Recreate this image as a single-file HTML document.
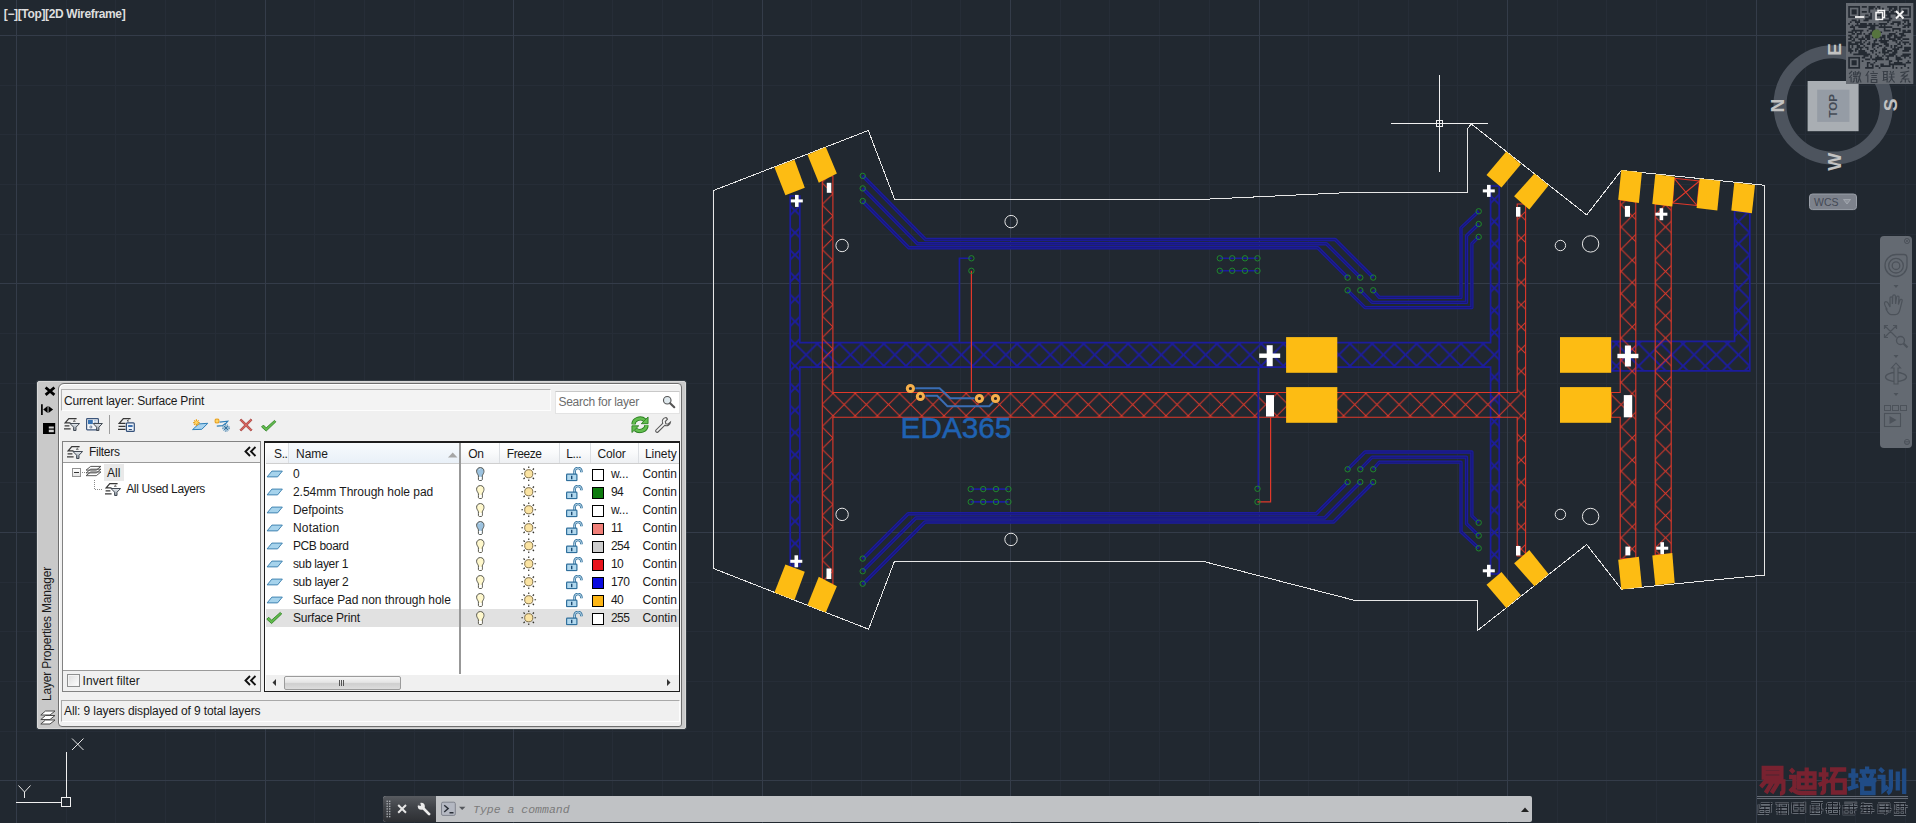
<!DOCTYPE html>
<html><head><meta charset="utf-8"><title>AutoCAD</title>
<style>
*{box-sizing:border-box;margin:0;padding:0}
html,body{width:1916px;height:823px;overflow:hidden;background:#212830}
body{position:relative;font-family:"Liberation Sans",sans-serif;font-size:12px;color:#1a1a1a}
.abs{position:absolute}
svg{position:absolute;left:0;top:0;overflow:visible}
.t{position:absolute;white-space:nowrap;line-height:14px;height:14px}
</style></head>
<body>

<svg width="0" height="0" style="position:absolute">
<defs>
<linearGradient id="gfun" x1="0" y1="0" x2="0" y2="1"><stop offset="0" stop-color="#e8ecf0"/><stop offset="1" stop-color="#8d97a3"/></linearGradient>
<symbol id="bulb" viewBox="0 0 9 15"><path d="M4.500 .6C2.200 .6 .6 2.300 .6 4.400c0 1.900 1.300 3 1.900 4.700v3.800c0 .6.600 1 1.200 1h1.600c.6 0 1.200-.4 1.200-1V9.100c.6-1.700 1.900-2.800 1.900-4.700C8.400 2.300 6.800 .6 4.500 .6z" fill="currentColor" stroke="#4e4e46" stroke-width="1"/><rect x="3.100" y="10" width="2.800" height="3.500" rx=".6" fill="#fff"/><path d="M3.200 3.200q.3-1.400 1.600-1.500" stroke="#fff" stroke-width=".8" fill="none" opacity=".7"/></symbol>
<symbol id="sun" viewBox="0 0 16 16"><circle cx="8" cy="8" r="4.200" fill="#fbe4a3" stroke="#7d6b44" stroke-width="1"/><path d="M8 .4v1.700M8 13.900v1.700M.4 8h1.700M13.900 8h1.700M2.600 2.600l1.300 1.300M12.100 12.100l1.300 1.300M13.400 2.600l-1.300 1.300M3.900 12.100l-1.300 1.300" stroke="#33322a" stroke-width="1.200"/></symbol>
<symbol id="lock" viewBox="0 0 17 14.500"><path d="M8.600 7.200V4.300a3.400 3.400 0 0 1 6.800 0V5.300" fill="none" stroke="#2f6f9c" stroke-width="2.600"/><path d="M8.600 7.200V4.300a3.400 3.400 0 0 1 6.800 0V5" fill="none" stroke="#d4ebf7" stroke-width=".9"/><rect x=".6" y="7.200" width="10.300" height="6.500" rx=".7" fill="#b1d8ee" stroke="#2f6f9c" stroke-width="1.200"/><path d="M5.700 8.700v3.500" stroke="#1c4a72" stroke-width="1.400"/></symbol>
<symbol id="lay" viewBox="0 0 18 10"><path d="M6 2.200H17L12 8.300H1z" fill="#a6d3ec" stroke="#3b7fae" stroke-width="1"/></symbol>
<symbol id="chk" viewBox="0 0 18 14"><path d="M1.500 8.500l2-2 3 3L15.500 1.500l1.500 1.500L6.500 13z" fill="#62bb4c" stroke="#2f8226" stroke-width=".9"/></symbol>
<symbol id="fil" viewBox="0 0 16 13"><path d="M12.600 .7H4.800L1.200 4.800H6.500M.6 7.800H5.400M0 10.800H6.600" fill="none" stroke="#383838" stroke-width="1.250"/><path d="M11.200 1.600L9.300 3.300h2.300" fill="none" stroke="#454545" stroke-width=".8"/><path d="M6 5.500h9.600l-3.600 3.700v3.300h-2.400V9.200z" fill="url(#gfun)" stroke="#424a54" stroke-width="1"/></symbol>
<symbol id="fil2" viewBox="0 0 17 13"><rect x=".6" y=".6" width="11.800" height="11.300" rx=".8" fill="#f2f5f9" stroke="#3c557a" stroke-width="1.200"/><rect x="2" y="1.900" width="4.800" height="4.200" fill="#3773b4"/><path d="M8 2.800h2.600M8 4.800h2.600" stroke="#9ab4d2" stroke-width="1"/><path d="M3.600 9l1.300-1.300L6.200 9 4.900 10.300z" stroke="#3c557a" stroke-width=".8" fill="none"/><path d="M7.200 5.500h9.200l-3.500 3.700v3.300h-2.300V9.200z" fill="url(#gfun)" stroke="#424a54" stroke-width="1"/></symbol>
<symbol id="sta" viewBox="0 0 17 14"><path d="M12.600 .6H5.400L1.200 5.400H7.500M.6 8.400H7.500M0 11.400H7.500" fill="none" stroke="#383838" stroke-width="1.250"/><path d="M10.600 1.500L9 3h2" fill="none" stroke="#454545" stroke-width=".8"/><rect x="8.400" y="4.800" width="7.900" height="8.600" rx="1" fill="#edf3f9" stroke="#34507a" stroke-width="1.200"/><rect x="10.100" y="7" width="4.500" height="2" fill="#3d6fae"/><path d="M10.800 11.500h3.100" stroke="#34507a" stroke-width="1"/></symbol>
<symbol id="newl" viewBox="0 0 16.500 11.500"><path d="M6.800 4.900L15.800 4.300 9.800 10.300 .5 10.700z" fill="#a9d4f0" stroke="#2f7fb8" stroke-width="1"/><path d="M4.400 .3v6.600M1.100 3.600h6.600M2.100 1.300l4.600 4.600M6.700 1.300L2.100 5.900" stroke="#eba21c" stroke-width="1.200"/><circle cx="4.400" cy="3.600" r="1.500" fill="#ffd766"/></symbol>
<symbol id="newf" viewBox="0 0 16.500 14"><path d="M3 .2v5.600M.2 3h5.600M1 1l4 4M5 1L1 5" stroke="#eba21c" stroke-width="1.100"/><circle cx="3" cy="3" r="1.200" fill="#ffd766"/><path d="M5.500 4.200l8.200-1-2.200 2.600M2.800 8.200l6-.6 2.700-2" fill="none" stroke="#2f7fb8" stroke-width="1.200"/><circle cx="12" cy="10" r="3.300" fill="#eaf4fb" stroke="#2f6f9c" stroke-width="1" stroke-dasharray="1.300 1"/><path d="M12 7.200v5.600M9.200 10h5.600M10 8l4 4M14 8l-4 4" stroke="#2f6f9c" stroke-width=".9"/></symbol>
<symbol id="del" viewBox="0 0 14 14"><path d="M1 2.200L2.200 1 7 5.700 11.800 1 13 2.200 8.300 7 13 11.800 11.800 13 7 8.300 2.200 13 1 11.800 5.700 7z" fill="#d9645d" stroke="#a03a36" stroke-width=".8" stroke-linejoin="round"/></symbol>
<symbol id="ref" viewBox="0 0 20 18"><g id="refh"><path d="M3.300 8.600A6.800 6.200 0 0 1 14.800 4.300" fill="none" stroke="#2a7d20" stroke-width="4.400"/><path d="M3.300 8.600A6.800 6.200 0 0 1 14.800 4.300" fill="none" stroke="#62bd4e" stroke-width="2.600"/><path d="M11.300 7.900h7V1z" fill="#62bd4e" stroke="#2a7d20" stroke-width=".9" stroke-linejoin="round"/></g><use href="#refh" transform="rotate(180 10 9)"/></symbol>
<symbol id="wr" viewBox="0 0 18 18"><path d="M12 1.500a4 4 0 0 0-3.300 5.800L1.800 14.200a1.500 1.500 0 0 0 2 2l6.900-6.900A4 4 0 0 0 16.500 6l-2.500 2.200-2.200-.5-.5-2.200L13.500 3.200A4 4 0 0 0 12 1.500z" fill="#f4f4f4" stroke="#5a5a5a" stroke-width="1.100"/></symbol>
<symbol id="mag" viewBox="0 0 16 16"><circle cx="6" cy="6" r="4.300" fill="#dfe9ee" stroke="#555" stroke-width="1.300"/><path d="M9.300 9.300l4.700 4.700" stroke="#555" stroke-width="2.400" stroke-linecap="round"/></symbol>
<symbol id="stk2" viewBox="0 0 16 16"><path d="M5.500 1h9.500l-5 4H.8zM5.500 5.500h9.500l-5 4H.8zM5.500 10h9.500l-5 4H.8z" fill="#fff" stroke="#4a4a4a" stroke-width="1"/></symbol>
<symbol id="stk" viewBox="0 0 18 14"><path d="M6 1.500h11L12 5.500H1zM6 4.500h11L12 8.500H1zM6 7.500h11L12 11.500H1z" fill="#fff" stroke="#4a4a4a" stroke-width="1"/></symbol>
</defs></svg>

<svg width="1916" height="823" viewBox="0 0 1916 823">
<path d="M66.5 0V823M115.5 0V823M165.5 0V823M215.5 0V823M314.5 0V823M364.5 0V823M414.5 0V823M463.5 0V823M563.5 0V823M612.5 0V823M662.5 0V823M712.5 0V823M811.5 0V823M861.5 0V823M911.5 0V823M960.5 0V823M1060.5 0V823M1109.5 0V823M1159.5 0V823M1209.5 0V823M1308.5 0V823M1358.5 0V823M1408.5 0V823M1457.5 0V823M1557.5 0V823M1606.5 0V823M1656.5 0V823M1706.5 0V823M1805.5 0V823M1855.5 0V823M1905.5 0V823M0 85.5H1916M0 134.5H1916M0 184.5H1916M0 234.5H1916M0 333.5H1916M0 383.5H1916M0 432.5H1916M0 482.5H1916M0 582.5H1916M0 631.5H1916M0 681.5H1916M0 731.5H1916" stroke="#262d37" stroke-width="1" fill="none" shape-rendering="crispEdges"/>
<path d="M16.5 0V823M265.5 0V823M513.5 0V823M762.5 0V823M1010.5 0V823M1259.5 0V823M1507.5 0V823M1756.5 0V823M0 35.5H1916M0 283.5H1916M0 532.5H1916M0 780.5H1916" stroke="#343c49" stroke-width="1" fill="none" shape-rendering="crispEdges"/>
<defs>
<pattern id="hr" patternUnits="userSpaceOnUse" width="22.2" height="22.2" x="833" y="393.5">
<path d="M0 0L22.2 22.2M22.2 0L0 22.2" stroke="#e0382a" stroke-width="1" fill="none"/></pattern>
<pattern id="hb" patternUnits="userSpaceOnUse" width="22.2" height="22.2" x="795" y="343.7">
<path d="M0 0L22.2 22.2M22.2 0L0 22.2" stroke="#1c1c9e" stroke-width="1.8" fill="none"/></pattern>
</defs>
<polygon points="713.8,190.4 868.3,130.5 894.5,199.0 1210.5,199.0 1346.0,192.7 1467.8,192.7 1467.8,128.3 1471.4,124.0 1586.7,214.9 1621.3,170.4 1764.8,185.3 1764.8,575.0 1621.5,589.2 1586.7,544.6 1477.7,630.3 1477.7,600.7 1356.0,600.7 1201.7,561.0 894.6,561.0 868.6,629.2 713.8,568.6" fill="none" stroke="#e6e6e6" stroke-width="1" shape-rendering="crispEdges"/>
<polygon points="790.2,196.0 799.8,196.0 799.8,342.6 1490.6,342.6 1490.6,186.0 1499.2,186.0 1499.2,574.0 1490.6,574.0 1490.6,367.1 799.8,367.1 799.8,566.0 790.2,566.0" fill="url(#hb)" stroke="#1c1c9e" stroke-width="1.7"/>
<polygon points="1611.2,341.3 1734.6,341.3 1734.6,211.0 1749.8,213.0 1749.8,370.8 1611.2,370.8" fill="url(#hb)" stroke="#1c1c9e" stroke-width="1.7"/>
<polygon points="822.3,176.0 832.9,176.0 832.9,392.5 1517.2,392.5 1517.2,204.0 1525.6,204.0 1525.6,556.0 1517.2,556.0 1517.2,417.3 832.9,417.3 832.9,584.0 822.3,584.0" fill="url(#hr)" stroke="#e0382a" stroke-width="1.1"/>
<polygon points="1620.2,200.0 1635.8,202.0 1635.8,558.0 1620.2,559.0 1620.2,417.3 1611.2,417.3 1611.2,392.5 1620.2,392.5" fill="url(#hr)" stroke="#e0382a" stroke-width="1.1"/>
<polygon points="1655.2,204.0 1671.2,206.0 1671.2,554.0 1655.2,555.0" fill="url(#hr)" stroke="#e0382a" stroke-width="1.1"/>
<polygon points="1674.0,178.2 1699.5,181.0 1697.0,205.5 1672.5,203.0" fill="none" stroke="#e0382a" stroke-width="1.1"/>
<path d="M1674 178.2L1697 205.5M1699.5 181L1672.5 203" stroke="#e0382a" stroke-width="1.1" fill="none"/>
<polyline points="1373.2,290.3 1379.2,297.4 1461.0,297.4 1461.0,227.9 1478.7,211.3" fill="none" stroke="#1c1c9e" stroke-width="3.3" stroke-linejoin="round"/>
<polyline points="1373.2,290.3 1379.2,297.4 1461.0,297.4 1461.0,227.9 1478.7,211.3" fill="none" stroke="#181878" stroke-width="1.1" stroke-linejoin="round"/>
<polyline points="1373.2,469.3 1379.2,462.2 1461.0,462.2 1461.0,531.7 1478.7,548.3" fill="none" stroke="#1c1c9e" stroke-width="3.3" stroke-linejoin="round"/>
<polyline points="1373.2,469.3 1379.2,462.2 1461.0,462.2 1461.0,531.7 1478.7,548.3" fill="none" stroke="#181878" stroke-width="1.1" stroke-linejoin="round"/>
<polyline points="1360.3,290.3 1372.1,302.4 1466.5,302.4 1466.5,235.8 1478.7,224.0" fill="none" stroke="#1c1c9e" stroke-width="3.3" stroke-linejoin="round"/>
<polyline points="1360.3,290.3 1372.1,302.4 1466.5,302.4 1466.5,235.8 1478.7,224.0" fill="none" stroke="#181878" stroke-width="1.1" stroke-linejoin="round"/>
<polyline points="1360.3,469.3 1372.1,457.2 1466.5,457.2 1466.5,523.8 1478.7,535.6" fill="none" stroke="#1c1c9e" stroke-width="3.3" stroke-linejoin="round"/>
<polyline points="1360.3,469.3 1372.1,457.2 1466.5,457.2 1466.5,523.8 1478.7,535.6" fill="none" stroke="#181878" stroke-width="1.1" stroke-linejoin="round"/>
<polyline points="1347.6,290.3 1365.0,307.6 1471.9,307.6 1471.9,243.7 1478.7,236.9" fill="none" stroke="#1c1c9e" stroke-width="3.3" stroke-linejoin="round"/>
<polyline points="1347.6,290.3 1365.0,307.6 1471.9,307.6 1471.9,243.7 1478.7,236.9" fill="none" stroke="#181878" stroke-width="1.1" stroke-linejoin="round"/>
<polyline points="1347.6,469.3 1365.0,452.0 1471.9,452.0 1471.9,515.9 1478.7,522.7" fill="none" stroke="#1c1c9e" stroke-width="3.3" stroke-linejoin="round"/>
<polyline points="1347.6,469.3 1365.0,452.0 1471.9,452.0 1471.9,515.9 1478.7,522.7" fill="none" stroke="#181878" stroke-width="1.1" stroke-linejoin="round"/>
<polyline points="862.7,175.8 925.5,239.6 1335.2,239.6 1373.2,277.6" fill="none" stroke="#1c1c9e" stroke-width="3.5" stroke-linejoin="round"/>
<polyline points="862.7,175.8 925.5,239.6 1335.2,239.6 1373.2,277.6" fill="none" stroke="#181878" stroke-width="1.1" stroke-linejoin="round"/>
<polyline points="862.7,188.3 917.5,243.7 1326.4,243.7 1360.3,277.6" fill="none" stroke="#1c1c9e" stroke-width="3.5" stroke-linejoin="round"/>
<polyline points="862.7,188.3 917.5,243.7 1326.4,243.7 1360.3,277.6" fill="none" stroke="#181878" stroke-width="1.1" stroke-linejoin="round"/>
<polyline points="862.7,201.2 908.8,247.8 1317.8,247.8 1347.6,277.6" fill="none" stroke="#1c1c9e" stroke-width="3.5" stroke-linejoin="round"/>
<polyline points="862.7,201.2 908.8,247.8 1317.8,247.8 1347.6,277.6" fill="none" stroke="#181878" stroke-width="1.1" stroke-linejoin="round"/>
<polyline points="862.7,584.3 925.0,522.0 1333.5,522.0 1373.3,482.2" fill="none" stroke="#1c1c9e" stroke-width="3.5" stroke-linejoin="round"/>
<polyline points="862.7,584.3 925.0,522.0 1333.5,522.0 1373.3,482.2" fill="none" stroke="#181878" stroke-width="1.1" stroke-linejoin="round"/>
<polyline points="862.7,571.1 915.9,517.9 1324.6,517.9 1360.3,482.2" fill="none" stroke="#1c1c9e" stroke-width="3.5" stroke-linejoin="round"/>
<polyline points="862.7,571.1 915.9,517.9 1324.6,517.9 1360.3,482.2" fill="none" stroke="#181878" stroke-width="1.1" stroke-linejoin="round"/>
<polyline points="862.7,559.1 908.1,513.7 1316.2,513.7 1347.7,482.2" fill="none" stroke="#1c1c9e" stroke-width="3.5" stroke-linejoin="round"/>
<polyline points="862.7,559.1 908.1,513.7 1316.2,513.7 1347.7,482.2" fill="none" stroke="#181878" stroke-width="1.1" stroke-linejoin="round"/>
<polyline points="971.4,258.3 959.4,258.3 959.4,342.6" fill="none" stroke="#1c1c9e" stroke-width="1.6"/>
<polyline points="971.4,270.8 971.4,392.5" fill="none" stroke="#e0382a" stroke-width="1.2"/>
<polyline points="1258.3,367.1 1258.3,488.8" fill="none" stroke="#1c1c9e" stroke-width="1.6"/>
<polyline points="1270.6,417.3 1270.6,501.9 1257.5,501.9" fill="none" stroke="#e0382a" stroke-width="1.2"/>
<polyline points="1219.8,258.3 1257.5,258.3" fill="none" stroke="#1c1c9e" stroke-width="1.6"/>
<polyline points="1219.8,270.8 1257.5,270.8" fill="none" stroke="#1c1c9e" stroke-width="1.6"/>
<polyline points="970.7,489.1 1008.4,489.1" fill="none" stroke="#1c1c9e" stroke-width="1.6"/>
<polyline points="970.7,501.9 1008.4,501.9" fill="none" stroke="#1c1c9e" stroke-width="1.6"/>
<circle cx="862.7" cy="175.9" r="2.7" fill="none" stroke="#1e922c" stroke-width=".9"/>
<circle cx="862.7" cy="583.7" r="2.7" fill="none" stroke="#1e922c" stroke-width=".9"/>
<circle cx="862.7" cy="188.4" r="2.7" fill="none" stroke="#1e922c" stroke-width=".9"/>
<circle cx="862.7" cy="571.2" r="2.7" fill="none" stroke="#1e922c" stroke-width=".9"/>
<circle cx="862.7" cy="201.0" r="2.7" fill="none" stroke="#1e922c" stroke-width=".9"/>
<circle cx="862.7" cy="558.6" r="2.7" fill="none" stroke="#1e922c" stroke-width=".9"/>
<circle cx="1347.6" cy="277.6" r="2.7" fill="none" stroke="#1e922c" stroke-width=".9"/>
<circle cx="1347.6" cy="482.0" r="2.7" fill="none" stroke="#1e922c" stroke-width=".9"/>
<circle cx="1347.6" cy="290.3" r="2.7" fill="none" stroke="#1e922c" stroke-width=".9"/>
<circle cx="1347.6" cy="469.3" r="2.7" fill="none" stroke="#1e922c" stroke-width=".9"/>
<circle cx="1360.3" cy="277.6" r="2.7" fill="none" stroke="#1e922c" stroke-width=".9"/>
<circle cx="1360.3" cy="482.0" r="2.7" fill="none" stroke="#1e922c" stroke-width=".9"/>
<circle cx="1360.3" cy="290.3" r="2.7" fill="none" stroke="#1e922c" stroke-width=".9"/>
<circle cx="1360.3" cy="469.3" r="2.7" fill="none" stroke="#1e922c" stroke-width=".9"/>
<circle cx="1373.2" cy="277.6" r="2.7" fill="none" stroke="#1e922c" stroke-width=".9"/>
<circle cx="1373.2" cy="482.0" r="2.7" fill="none" stroke="#1e922c" stroke-width=".9"/>
<circle cx="1373.2" cy="290.3" r="2.7" fill="none" stroke="#1e922c" stroke-width=".9"/>
<circle cx="1373.2" cy="469.3" r="2.7" fill="none" stroke="#1e922c" stroke-width=".9"/>
<circle cx="1478.7" cy="211.3" r="2.7" fill="none" stroke="#1e922c" stroke-width=".9"/>
<circle cx="1478.7" cy="548.3" r="2.7" fill="none" stroke="#1e922c" stroke-width=".9"/>
<circle cx="1478.7" cy="224.0" r="2.7" fill="none" stroke="#1e922c" stroke-width=".9"/>
<circle cx="1478.7" cy="535.6" r="2.7" fill="none" stroke="#1e922c" stroke-width=".9"/>
<circle cx="1478.7" cy="236.9" r="2.7" fill="none" stroke="#1e922c" stroke-width=".9"/>
<circle cx="1478.7" cy="522.7" r="2.7" fill="none" stroke="#1e922c" stroke-width=".9"/>
<circle cx="1219.8" cy="258.3" r="2.7" fill="none" stroke="#1e922c" stroke-width=".9"/>
<circle cx="1219.8" cy="270.8" r="2.7" fill="none" stroke="#1e922c" stroke-width=".9"/>
<circle cx="1232.2" cy="258.3" r="2.7" fill="none" stroke="#1e922c" stroke-width=".9"/>
<circle cx="1232.2" cy="270.8" r="2.7" fill="none" stroke="#1e922c" stroke-width=".9"/>
<circle cx="1245.0" cy="258.3" r="2.7" fill="none" stroke="#1e922c" stroke-width=".9"/>
<circle cx="1245.0" cy="270.8" r="2.7" fill="none" stroke="#1e922c" stroke-width=".9"/>
<circle cx="1257.5" cy="258.3" r="2.7" fill="none" stroke="#1e922c" stroke-width=".9"/>
<circle cx="1257.5" cy="270.8" r="2.7" fill="none" stroke="#1e922c" stroke-width=".9"/>
<circle cx="970.7" cy="489.1" r="2.7" fill="none" stroke="#1e922c" stroke-width=".9"/>
<circle cx="970.7" cy="501.9" r="2.7" fill="none" stroke="#1e922c" stroke-width=".9"/>
<circle cx="983.2" cy="489.1" r="2.7" fill="none" stroke="#1e922c" stroke-width=".9"/>
<circle cx="983.2" cy="501.9" r="2.7" fill="none" stroke="#1e922c" stroke-width=".9"/>
<circle cx="996.0" cy="489.1" r="2.7" fill="none" stroke="#1e922c" stroke-width=".9"/>
<circle cx="996.0" cy="501.9" r="2.7" fill="none" stroke="#1e922c" stroke-width=".9"/>
<circle cx="1008.4" cy="489.1" r="2.7" fill="none" stroke="#1e922c" stroke-width=".9"/>
<circle cx="1008.4" cy="501.9" r="2.7" fill="none" stroke="#1e922c" stroke-width=".9"/>
<circle cx="971.4" cy="258.3" r="2.7" fill="none" stroke="#1e922c" stroke-width=".9"/>
<circle cx="971.4" cy="270.8" r="2.7" fill="none" stroke="#1e922c" stroke-width=".9"/>
<circle cx="1257.5" cy="488.8" r="2.7" fill="none" stroke="#1e922c" stroke-width=".9"/>
<circle cx="1257.5" cy="501.9" r="2.7" fill="none" stroke="#1e922c" stroke-width=".9"/>
<circle cx="842.1" cy="245.5" r="6.2" fill="none" stroke="#e6e6e6" stroke-width="1"/>
<circle cx="1011.1" cy="221.6" r="6.2" fill="none" stroke="#e6e6e6" stroke-width="1"/>
<circle cx="842.1" cy="514.4" r="6.2" fill="none" stroke="#e6e6e6" stroke-width="1"/>
<circle cx="1011.0" cy="539.4" r="6.2" fill="none" stroke="#e6e6e6" stroke-width="1"/>
<circle cx="1560.4" cy="245.5" r="5.2" fill="none" stroke="#e6e6e6" stroke-width="1"/>
<circle cx="1590.6" cy="243.9" r="8.2" fill="none" stroke="#e6e6e6" stroke-width="1"/>
<circle cx="1560.4" cy="514.4" r="5.2" fill="none" stroke="#e6e6e6" stroke-width="1"/>
<circle cx="1590.6" cy="516.5" r="8.2" fill="none" stroke="#e6e6e6" stroke-width="1"/>
<polygon points="774.4,167.2 794.5,159.7 804.8,187.8 785.4,195.2" fill="#fdbc13"/>
<polygon points="774.4,592.4 794.5,599.9 804.8,571.8 785.4,564.4" fill="#fdbc13"/>
<polygon points="807.5,154.7 825.8,147.1 836.9,173.4 818.8,182.8" fill="#fdbc13"/>
<polygon points="807.5,604.9 825.8,612.5 836.9,586.2 818.8,576.8" fill="#fdbc13"/>
<polygon points="1506.3,151.6 1520.9,164.3 1501.5,187.6 1486.5,174.9" fill="#fdbc13"/>
<polygon points="1506.3,608.0 1520.9,595.3 1501.5,572.0 1486.5,584.7" fill="#fdbc13"/>
<polygon points="1534.5,173.4 1548.5,185.6 1529.3,209.5 1514.1,196.3" fill="#fdbc13"/>
<polygon points="1534.5,586.2 1548.5,574.0 1529.3,550.1 1514.1,563.3" fill="#fdbc13"/>
<polygon points="1621.3,170.1 1641.9,172.5 1638.9,202.9 1618.2,199.8" fill="#fdbc13"/>
<polygon points="1621.3,589.5 1641.9,587.1 1638.9,556.7 1618.2,559.8" fill="#fdbc13"/>
<polygon points="1655.3,174.3 1674.7,176.7 1672.3,206.5 1652.3,204.1" fill="#fdbc13"/>
<polygon points="1655.3,585.3 1674.7,582.9 1672.3,553.1 1652.3,555.5" fill="#fdbc13"/>
<polygon points="1699.7,178.6 1720.3,181.0 1717.3,210.5 1696.6,208.1" fill="#fdbc13"/>
<polygon points="1734.3,182.6 1755.0,185.0 1751.9,213.2 1731.3,210.5" fill="#fdbc13"/>
<rect x="1286.1" y="337.1" width="51.2" height="35.7" fill="#fdbc13"/>
<rect x="1286.1" y="387.1" width="51.2" height="35.7" fill="#fdbc13"/>
<rect x="1560.0" y="337.1" width="51.2" height="35.7" fill="#fdbc13"/>
<rect x="1560.0" y="387.1" width="51.2" height="35.7" fill="#fdbc13"/>
<rect x="795.0" y="194.9" width="3.6" height="12.0" fill="#fff"/>
<rect x="790.8" y="199.4" width="12.0" height="3.0" fill="#fff"/>
<rect x="794.5" y="555.3" width="3.6" height="12.0" fill="#fff"/>
<rect x="790.3" y="559.8" width="12.0" height="3.0" fill="#fff"/>
<rect x="826.8" y="182.8" width="4.5" height="10.0" fill="#fff"/>
<rect x="826.5" y="568.5" width="4.8" height="10.5" fill="#fff"/>
<rect x="1487.0" y="184.9" width="3.6" height="12.0" fill="#fff"/>
<rect x="1482.8" y="189.4" width="12.0" height="3.0" fill="#fff"/>
<rect x="1487.0" y="564.8" width="3.6" height="12.0" fill="#fff"/>
<rect x="1482.8" y="569.3" width="12.0" height="3.0" fill="#fff"/>
<rect x="1516.0" y="207.0" width="4.4" height="9.7" fill="#fff"/>
<rect x="1516.0" y="546.0" width="4.4" height="9.5" fill="#fff"/>
<rect x="1266.7" y="345.2" width="6.0" height="21.0" fill="#fff"/>
<rect x="1259.2" y="353.5" width="21.0" height="4.4" fill="#fff"/>
<rect x="1266.0" y="395.1" width="8.0" height="21.4" fill="#fff"/>
<rect x="1624.9" y="345.5" width="6.0" height="21.0" fill="#fff"/>
<rect x="1617.4" y="353.8" width="21.0" height="4.4" fill="#fff"/>
<rect x="1623.8" y="395.1" width="8.4" height="22.2" fill="#fff"/>
<rect x="1624.9" y="205.9" width="5.1" height="10.9" fill="#fff"/>
<rect x="1659.6" y="208.2" width="3.6" height="12.0" fill="#fff"/>
<rect x="1655.4" y="212.7" width="12.0" height="3.0" fill="#fff"/>
<rect x="1625.4" y="546.6" width="4.9" height="8.8" fill="#fff"/>
<rect x="1660.4" y="542.2" width="3.6" height="12.0" fill="#fff"/>
<rect x="1656.2" y="546.7" width="12.0" height="3.0" fill="#fff"/>
<polyline points="915.3,388.2 939.6,388.2 950.3,398.2 974.6,398.2" fill="none" stroke="#3a6db4" stroke-width="2"/>
<polyline points="925.5,395.8 937.2,395.8 947.4,406.2 989.2,406.2 993.0,402.6" fill="none" stroke="#3a6db4" stroke-width="2"/>
<circle cx="910.4" cy="388.5" r="3.1" fill="#2a2420" stroke="#f6b04c" stroke-width="3"/>
<circle cx="920.4" cy="396.4" r="3.1" fill="#2a2420" stroke="#f6b04c" stroke-width="3"/>
<circle cx="979.4" cy="398.5" r="3.1" fill="#2a2420" stroke="#f6b04c" stroke-width="3"/>
<circle cx="995.5" cy="398.5" r="3.1" fill="#2a2420" stroke="#f6b04c" stroke-width="3"/>
<text x="900.6" y="438" font-family="Liberation Sans, sans-serif" font-size="29.4" fill="#1f62b2" stroke="#1f62b2" stroke-width=".5" textLength="110.8" lengthAdjust="spacingAndGlyphs">EDA365</text>
<path d="M1390.5 123.5H1488M1439.5 75V172" stroke="#f0f0f0" stroke-width="1" fill="none" shape-rendering="crispEdges"/>
<rect x="1436.5" y="120.5" width="6" height="6" fill="none" stroke="#f0f0f0" stroke-width="1" shape-rendering="crispEdges"/>
<path d="M66.5 752V798M16 802.5H62" stroke="#f0f0f0" stroke-width="1" fill="none" shape-rendering="crispEdges"/>
<rect x="61.5" y="797.5" width="9" height="9" fill="none" stroke="#f0f0f0" stroke-width="1" shape-rendering="crispEdges"/>
<path d="M72 738.5L83.5 750M83.5 738.5L72 750" stroke="#e8e8e8" stroke-width="1" fill="none"/>
<path d="M18.5 785.5L24.5 792L30.5 785.5M24.5 792V798" stroke="#e8e8e8" stroke-width="1" fill="none"/>
<circle cx="1833.2" cy="104.9" r="53.2" fill="none" stroke="#4d545e" stroke-width="13"/>
<text x="1833.8" y="49.5" font-family="Liberation Sans, sans-serif" font-size="19" font-weight="bold" fill="#c2c2c2" text-anchor="middle" transform="rotate(-90 1833.8 49.5)" dy="6.800">E</text>
<text x="1777.3" y="105.5" font-family="Liberation Sans, sans-serif" font-size="19" font-weight="bold" fill="#c2c2c2" text-anchor="middle" transform="rotate(-90 1777.3 105.5)" dy="6.800">N</text>
<text x="1890.0" y="104.9" font-family="Liberation Sans, sans-serif" font-size="19" font-weight="bold" fill="#c2c2c2" text-anchor="middle" transform="rotate(-90 1890.0 104.9)" dy="6.800">S</text>
<text x="1833.8" y="161.7" font-family="Liberation Sans, sans-serif" font-size="19" font-weight="bold" fill="#c2c2c2" text-anchor="middle" transform="rotate(-90 1833.8 161.7)" dy="6.800">W</text>
<rect x="1807.6" y="81" width="51" height="50.2" fill="#a9aeb3"/>
<rect x="1817.2" y="89.7" width="32.2" height="32.2" fill="#959ca5"/>
<text x="1833.2" y="105.8" font-family="Liberation Sans, sans-serif" font-size="11.5" font-weight="bold" fill="#454b55" text-anchor="middle" transform="rotate(-90 1833.2 105.8)" dy="4.100">TOP</text>
<rect x="1809.5" y="194" width="47" height="15.6" rx="3" fill="#7d828c" stroke="#9a9fa8" stroke-width="1"/>
<text x="1814" y="206" font-family="Liberation Sans, sans-serif" font-size="10.5" fill="#434955">WCS</text>
<path d="M1843.5 199.5h7l-3.5 4.5z" fill="#8e939c" stroke="#a8adb5" stroke-width=".8"/>
<rect x="1880" y="236" width="32" height="212" rx="4" fill="#646a72"/>
<circle cx="1907" cy="241" r="2.6" fill="none" stroke="#4c525a" stroke-width="1"/>
<path d="M1905.3 239.3l3.4 3.4m0-3.4l-3.4 3.4" stroke="#4c525a" stroke-width=".8"/>
<circle cx="1907" cy="442" r="2.6" fill="none" stroke="#4c525a" stroke-width="1"/>
<path d="M1905 441.5h4M1905 443h4" stroke="#4c525a" stroke-width=".7"/>
<path d="M1896 254.5a11 11 0 1 0 11 11v-8a3 3 0 0 0 -3 -3z" fill="none" stroke="#4c525a" stroke-width="1.3"/>
<circle cx="1896" cy="265.7" r="7.3" fill="none" stroke="#4c525a" stroke-width="1.3"/>
<circle cx="1896" cy="265.7" r="3.8" fill="none" stroke="#4c525a" stroke-width="1.3"/>
<path d="M1893.5 285.0h5l-2.5 3z" fill="#4c525a"/>
<path d="M1893.5 355.0h5l-2.5 3z" fill="#4c525a"/>
<path d="M1893.5 393.0h5l-2.5 3z" fill="#4c525a"/>
<path d="M1887 309c-2-3-3-6-2-7s3 0 4 3l1 2v-9c0-1.5 2.4-1.5 2.4 0v6l.4-8c0-1.5 2.6-1.5 2.6 0l.2 8 1-7c.2-1.5 2.6-1.2 2.4.3l-.6 7.2 1.6-4.5c.5-1.3 2.6-.7 2.2.7l-2 8c-.8 4-2 6-5 6h-4c-2.500 0-3.200-2-5.200-5.700z" fill="none" stroke="#4c525a" stroke-width="1.2"/>
<path d="M1884.500 325.500l12 12m-12 0l12-12M1884.500 329v-3.500h3.500M1893 325.500h3.500v3.500M1884.500 334v3.500h3.500" fill="none" stroke="#4c525a" stroke-width="1.2"/>
<circle cx="1900.500" cy="340.500" r="4" fill="none" stroke="#4c525a" stroke-width="1.3"/>
<path d="M1903.500 343.500l4 4" stroke="#4c525a" stroke-width="2.200"/>
<ellipse cx="1896" cy="377" rx="10.500" ry="4.500" fill="none" stroke="#4c525a" stroke-width="1.300"/>
<path d="M1894 384v-16h-2.500l4.500-5 4.500 5h-2.500v16z" fill="#646a72" stroke="#4c525a" stroke-width="1.100"/>
<rect x="1884.5" y="405.500" width="6" height="5" fill="none" stroke="#4c525a" stroke-width="1"/>
<rect x="1892.5" y="405.500" width="6" height="5" fill="none" stroke="#4c525a" stroke-width="1"/>
<rect x="1900.5" y="405.500" width="6" height="5" fill="none" stroke="#4c525a" stroke-width="1"/>
<rect x="1884.500" y="413.500" width="16" height="13" fill="none" stroke="#4c525a" stroke-width="1.100"/>
<path d="M1889.500 416l7 4-7 4z" fill="#4c525a"/>
<rect x="1846" y="3" width="67.300" height="81" fill="#666b72"/>
<path d="M1861.76 6.00h3.39v1.69h-3.39zM1865.15 6.00h1.69v1.69h-1.69zM1868.54 6.00h1.69v1.69h-1.69zM1870.23 6.00h1.69v1.69h-1.69zM1871.92 6.00h3.39v1.69h-3.39zM1877.01 6.00h3.39v1.69h-3.39zM1887.18 6.00h1.69v1.69h-1.69zM1888.87 6.00h6.78v1.69h-6.78zM1895.65 6.00h1.69v1.69h-1.69zM1868.54 7.69h5.08v1.69h-5.08zM1875.31 7.69h1.69v1.69h-1.69zM1878.70 7.69h1.69v1.69h-1.69zM1882.09 7.69h1.69v1.69h-1.69zM1888.87 7.69h1.69v1.69h-1.69zM1890.56 7.69h1.69v1.69h-1.69zM1893.95 7.69h1.69v1.69h-1.69zM1895.65 7.69h1.69v1.69h-1.69zM1868.54 9.39h1.69v1.69h-1.69zM1882.09 9.39h1.69v1.69h-1.69zM1888.87 9.39h1.69v1.69h-1.69zM1892.26 9.39h1.69v1.69h-1.69zM1893.95 9.39h3.39v1.69h-3.39zM1861.76 11.08h1.69v1.69h-1.69zM1863.45 11.08h3.39v1.69h-3.39zM1868.54 11.08h1.69v1.69h-1.69zM1877.01 11.08h1.69v1.69h-1.69zM1878.70 11.08h1.69v1.69h-1.69zM1882.09 11.08h6.78v1.69h-6.78zM1890.56 11.08h3.39v1.69h-3.39zM1870.23 12.78h1.69v1.69h-1.69zM1880.40 12.78h1.69v1.69h-1.69zM1882.09 12.78h6.78v1.69h-6.78zM1888.87 12.78h6.78v1.69h-6.78zM1895.65 12.78h1.69v1.69h-1.69zM1865.15 14.47h3.39v1.69h-3.39zM1870.23 14.47h1.69v1.69h-1.69zM1877.01 14.47h3.39v1.69h-3.39zM1880.40 14.47h1.69v1.69h-1.69zM1882.09 14.47h3.39v1.69h-3.39zM1887.18 14.47h1.69v1.69h-1.69zM1888.87 14.47h1.69v1.69h-1.69zM1895.65 14.47h1.69v1.69h-1.69zM1863.45 16.17h1.69v1.69h-1.69zM1868.54 16.17h3.39v1.69h-3.39zM1880.40 16.17h1.69v1.69h-1.69zM1882.09 16.17h8.47v1.69h-8.47zM1865.15 17.86h6.78v1.69h-6.78zM1880.40 17.86h1.69v1.69h-1.69zM1888.87 17.86h1.69v1.69h-1.69zM1890.56 17.86h1.69v1.69h-1.69zM1851.59 19.56h5.08v1.69h-5.08zM1858.37 19.56h1.69v1.69h-1.69zM1863.45 19.56h1.69v1.69h-1.69zM1865.15 19.56h3.39v1.69h-3.39zM1878.70 19.56h6.78v1.69h-6.78zM1885.48 19.56h1.69v1.69h-1.69zM1887.18 19.56h1.69v1.69h-1.69zM1888.87 19.56h1.69v1.69h-1.69zM1902.43 19.56h1.69v1.69h-1.69zM1904.12 19.56h3.39v1.69h-3.39zM1907.51 19.56h1.69v1.69h-1.69zM1849.89 21.25h1.69v1.69h-1.69zM1854.98 21.25h1.69v1.69h-1.69zM1856.67 21.25h3.39v1.69h-3.39zM1887.18 21.25h1.69v1.69h-1.69zM1892.26 21.25h3.39v1.69h-3.39zM1895.65 21.25h5.08v1.69h-5.08zM1904.12 21.25h1.69v1.69h-1.69zM1907.51 21.25h1.69v1.69h-1.69zM1848.20 22.95h1.69v1.69h-1.69zM1856.67 22.95h1.69v1.69h-1.69zM1860.06 22.95h5.08v1.69h-5.08zM1865.15 22.95h1.69v1.69h-1.69zM1868.54 22.95h3.39v1.69h-3.39zM1873.62 22.95h1.69v1.69h-1.69zM1878.70 22.95h5.08v1.69h-5.08zM1883.79 22.95h3.39v1.69h-3.39zM1890.56 22.95h3.39v1.69h-3.39zM1897.34 22.95h3.39v1.69h-3.39zM1902.43 22.95h1.69v1.69h-1.69zM1907.51 22.95h1.69v1.69h-1.69zM1909.21 22.95h1.69v1.69h-1.69zM1851.59 24.64h1.69v1.69h-1.69zM1854.98 24.64h3.39v1.69h-3.39zM1858.37 24.64h11.86v1.69h-11.86zM1870.23 24.64h1.69v1.69h-1.69zM1871.92 24.64h1.69v1.69h-1.69zM1873.62 24.64h5.08v1.69h-5.08zM1880.40 24.64h1.69v1.69h-1.69zM1883.79 24.64h1.69v1.69h-1.69zM1897.34 24.64h1.69v1.69h-1.69zM1904.12 24.64h6.78v1.69h-6.78zM1849.89 26.34h5.08v1.69h-5.08zM1858.37 26.34h5.08v1.69h-5.08zM1863.45 26.34h1.69v1.69h-1.69zM1865.15 26.34h1.69v1.69h-1.69zM1870.23 26.34h1.69v1.69h-1.69zM1871.92 26.34h1.69v1.69h-1.69zM1873.62 26.34h1.69v1.69h-1.69zM1878.70 26.34h1.69v1.69h-1.69zM1880.40 26.34h5.08v1.69h-5.08zM1885.48 26.34h6.78v1.69h-6.78zM1902.43 26.34h1.69v1.69h-1.69zM1904.12 26.34h1.69v1.69h-1.69zM1907.51 26.34h1.69v1.69h-1.69zM1853.28 28.03h1.69v1.69h-1.69zM1868.54 28.03h5.08v1.69h-5.08zM1873.62 28.03h1.69v1.69h-1.69zM1883.79 28.03h1.69v1.69h-1.69zM1892.26 28.03h1.69v1.69h-1.69zM1893.95 28.03h5.08v1.69h-5.08zM1899.04 28.03h1.69v1.69h-1.69zM1851.59 29.72h5.08v1.69h-5.08zM1856.67 29.72h1.69v1.69h-1.69zM1858.37 29.72h5.08v1.69h-5.08zM1866.84 29.72h1.69v1.69h-1.69zM1871.92 29.72h1.69v1.69h-1.69zM1873.62 29.72h1.69v1.69h-1.69zM1877.01 29.72h1.69v1.69h-1.69zM1883.79 29.72h3.39v1.69h-3.39zM1887.18 29.72h1.69v1.69h-1.69zM1888.87 29.72h1.69v1.69h-1.69zM1892.26 29.72h1.69v1.69h-1.69zM1899.04 29.72h1.69v1.69h-1.69zM1902.43 29.72h3.39v1.69h-3.39zM1907.51 29.72h3.39v1.69h-3.39zM1848.20 31.42h3.39v1.69h-3.39zM1851.59 31.42h1.69v1.69h-1.69zM1854.98 31.42h1.69v1.69h-1.69zM1860.06 31.42h1.69v1.69h-1.69zM1870.23 31.42h5.08v1.69h-5.08zM1875.31 31.42h1.69v1.69h-1.69zM1877.01 31.42h3.39v1.69h-3.39zM1880.40 31.42h1.69v1.69h-1.69zM1895.65 31.42h1.69v1.69h-1.69zM1902.43 31.42h3.39v1.69h-3.39zM1905.82 31.42h1.69v1.69h-1.69zM1907.51 31.42h3.39v1.69h-3.39zM1851.59 33.11h1.69v1.69h-1.69zM1853.28 33.11h1.69v1.69h-1.69zM1856.67 33.11h5.08v1.69h-5.08zM1863.45 33.11h1.69v1.69h-1.69zM1868.54 33.11h5.08v1.69h-5.08zM1873.62 33.11h5.08v1.69h-5.08zM1888.87 33.11h5.08v1.69h-5.08zM1893.95 33.11h1.69v1.69h-1.69zM1899.04 33.11h5.08v1.69h-5.08zM1848.20 34.81h3.39v1.69h-3.39zM1856.67 34.81h1.69v1.69h-1.69zM1865.15 34.81h5.08v1.69h-5.08zM1882.09 34.81h1.69v1.69h-1.69zM1883.79 34.81h1.69v1.69h-1.69zM1887.18 34.81h5.08v1.69h-5.08zM1893.95 34.81h3.39v1.69h-3.39zM1900.73 34.81h1.69v1.69h-1.69zM1902.43 34.81h3.39v1.69h-3.39zM1849.89 36.50h3.39v1.69h-3.39zM1854.98 36.50h3.39v1.69h-3.39zM1861.76 36.50h1.69v1.69h-1.69zM1865.15 36.50h5.08v1.69h-5.08zM1871.92 36.50h1.69v1.69h-1.69zM1877.01 36.50h1.69v1.69h-1.69zM1878.70 36.50h1.69v1.69h-1.69zM1880.40 36.50h3.39v1.69h-3.39zM1883.79 36.50h1.69v1.69h-1.69zM1887.18 36.50h3.39v1.69h-3.39zM1893.95 36.50h1.69v1.69h-1.69zM1895.65 36.50h1.69v1.69h-1.69zM1897.34 36.50h5.08v1.69h-5.08zM1848.20 38.20h3.39v1.69h-3.39zM1853.28 38.20h1.69v1.69h-1.69zM1858.37 38.20h6.78v1.69h-6.78zM1866.84 38.20h1.69v1.69h-1.69zM1868.54 38.20h1.69v1.69h-1.69zM1875.31 38.20h1.69v1.69h-1.69zM1880.40 38.20h1.69v1.69h-1.69zM1883.79 38.20h1.69v1.69h-1.69zM1888.87 38.20h5.08v1.69h-5.08zM1893.95 38.20h1.69v1.69h-1.69zM1897.34 38.20h3.39v1.69h-3.39zM1902.43 38.20h1.69v1.69h-1.69zM1904.12 38.20h5.08v1.69h-5.08zM1851.59 39.89h3.39v1.69h-3.39zM1860.06 39.89h1.69v1.69h-1.69zM1865.15 39.89h1.69v1.69h-1.69zM1873.62 39.89h3.39v1.69h-3.39zM1878.70 39.89h3.39v1.69h-3.39zM1882.09 39.89h5.08v1.69h-5.08zM1887.18 39.89h1.69v1.69h-1.69zM1892.26 39.89h5.08v1.69h-5.08zM1900.73 39.89h1.69v1.69h-1.69zM1848.20 41.59h1.69v1.69h-1.69zM1849.89 41.59h1.69v1.69h-1.69zM1854.98 41.59h6.78v1.69h-6.78zM1863.45 41.59h1.69v1.69h-1.69zM1868.54 41.59h1.69v1.69h-1.69zM1873.62 41.59h1.69v1.69h-1.69zM1880.40 41.59h6.78v1.69h-6.78zM1895.65 41.59h1.69v1.69h-1.69zM1899.04 41.59h1.69v1.69h-1.69zM1902.43 41.59h1.69v1.69h-1.69zM1904.12 41.59h5.08v1.69h-5.08zM1848.20 43.28h5.08v1.69h-5.08zM1853.28 43.28h5.08v1.69h-5.08zM1860.06 43.28h3.39v1.69h-3.39zM1866.84 43.28h3.39v1.69h-3.39zM1871.92 43.28h3.39v1.69h-3.39zM1875.31 43.28h1.69v1.69h-1.69zM1877.01 43.28h1.69v1.69h-1.69zM1883.79 43.28h1.69v1.69h-1.69zM1885.48 43.28h3.39v1.69h-3.39zM1897.34 43.28h3.39v1.69h-3.39zM1904.12 43.28h1.69v1.69h-1.69zM1909.21 43.28h1.69v1.69h-1.69zM1848.20 44.98h1.69v1.69h-1.69zM1851.59 44.98h1.69v1.69h-1.69zM1856.67 44.98h3.39v1.69h-3.39zM1863.45 44.98h1.69v1.69h-1.69zM1871.92 44.98h1.69v1.69h-1.69zM1873.62 44.98h1.69v1.69h-1.69zM1878.70 44.98h3.39v1.69h-3.39zM1885.48 44.98h3.39v1.69h-3.39zM1890.56 44.98h1.69v1.69h-1.69zM1893.95 44.98h1.69v1.69h-1.69zM1895.65 44.98h1.69v1.69h-1.69zM1900.73 44.98h1.69v1.69h-1.69zM1848.20 46.67h1.69v1.69h-1.69zM1851.59 46.67h1.69v1.69h-1.69zM1856.67 46.67h1.69v1.69h-1.69zM1858.37 46.67h3.39v1.69h-3.39zM1861.76 46.67h1.69v1.69h-1.69zM1865.15 46.67h1.69v1.69h-1.69zM1866.84 46.67h1.69v1.69h-1.69zM1871.92 46.67h1.69v1.69h-1.69zM1877.01 46.67h1.69v1.69h-1.69zM1883.79 46.67h1.69v1.69h-1.69zM1890.56 46.67h1.69v1.69h-1.69zM1893.95 46.67h1.69v1.69h-1.69zM1897.34 46.67h1.69v1.69h-1.69zM1899.04 46.67h1.69v1.69h-1.69zM1900.73 46.67h1.69v1.69h-1.69zM1904.12 46.67h3.39v1.69h-3.39zM1907.51 46.67h3.39v1.69h-3.39zM1848.20 48.36h3.39v1.69h-3.39zM1854.98 48.36h1.69v1.69h-1.69zM1856.67 48.36h1.69v1.69h-1.69zM1860.06 48.36h1.69v1.69h-1.69zM1866.84 48.36h1.69v1.69h-1.69zM1873.62 48.36h1.69v1.69h-1.69zM1882.09 48.36h1.69v1.69h-1.69zM1883.79 48.36h1.69v1.69h-1.69zM1885.48 48.36h1.69v1.69h-1.69zM1892.26 48.36h6.78v1.69h-6.78zM1904.12 48.36h3.39v1.69h-3.39zM1907.51 48.36h3.39v1.69h-3.39zM1848.20 50.06h3.39v1.69h-3.39zM1851.59 50.06h1.69v1.69h-1.69zM1854.98 50.06h1.69v1.69h-1.69zM1858.37 50.06h1.69v1.69h-1.69zM1860.06 50.06h5.08v1.69h-5.08zM1870.23 50.06h3.39v1.69h-3.39zM1875.31 50.06h1.69v1.69h-1.69zM1882.09 50.06h1.69v1.69h-1.69zM1883.79 50.06h1.69v1.69h-1.69zM1887.18 50.06h3.39v1.69h-3.39zM1890.56 50.06h1.69v1.69h-1.69zM1893.95 50.06h3.39v1.69h-3.39zM1902.43 50.06h6.78v1.69h-6.78zM1849.89 51.75h1.69v1.69h-1.69zM1858.37 51.75h8.47v1.69h-8.47zM1871.92 51.75h1.69v1.69h-1.69zM1878.70 51.75h1.69v1.69h-1.69zM1882.09 51.75h1.69v1.69h-1.69zM1883.79 51.75h5.08v1.69h-5.08zM1892.26 51.75h1.69v1.69h-1.69zM1893.95 51.75h3.39v1.69h-3.39zM1853.28 53.45h3.39v1.69h-3.39zM1856.67 53.45h1.69v1.69h-1.69zM1858.37 53.45h5.08v1.69h-5.08zM1863.45 53.45h6.78v1.69h-6.78zM1875.31 53.45h1.69v1.69h-1.69zM1883.79 53.45h1.69v1.69h-1.69zM1888.87 53.45h6.78v1.69h-6.78zM1902.43 53.45h5.08v1.69h-5.08zM1907.51 53.45h3.39v1.69h-3.39zM1863.45 55.14h5.08v1.69h-5.08zM1870.23 55.14h1.69v1.69h-1.69zM1877.01 55.14h1.69v1.69h-1.69zM1882.09 55.14h1.69v1.69h-1.69zM1885.48 55.14h1.69v1.69h-1.69zM1887.18 55.14h1.69v1.69h-1.69zM1888.87 55.14h5.08v1.69h-5.08zM1895.65 55.14h1.69v1.69h-1.69zM1900.73 55.14h1.69v1.69h-1.69zM1902.43 55.14h1.69v1.69h-1.69zM1904.12 55.14h1.69v1.69h-1.69zM1905.82 55.14h3.39v1.69h-3.39zM1861.76 56.84h1.69v1.69h-1.69zM1863.45 56.84h1.69v1.69h-1.69zM1870.23 56.84h1.69v1.69h-1.69zM1875.31 56.84h1.69v1.69h-1.69zM1877.01 56.84h5.08v1.69h-5.08zM1887.18 56.84h1.69v1.69h-1.69zM1895.65 56.84h5.08v1.69h-5.08zM1904.12 56.84h1.69v1.69h-1.69zM1909.21 56.84h1.69v1.69h-1.69zM1865.15 58.53h5.08v1.69h-5.08zM1871.92 58.53h6.78v1.69h-6.78zM1878.70 58.53h5.08v1.69h-5.08zM1885.48 58.53h1.69v1.69h-1.69zM1887.18 58.53h1.69v1.69h-1.69zM1895.65 58.53h1.69v1.69h-1.69zM1897.34 58.53h3.39v1.69h-3.39zM1900.73 58.53h1.69v1.69h-1.69zM1861.76 60.23h1.69v1.69h-1.69zM1875.31 60.23h1.69v1.69h-1.69zM1888.87 60.23h1.69v1.69h-1.69zM1890.56 60.23h1.69v1.69h-1.69zM1897.34 60.23h1.69v1.69h-1.69zM1907.51 60.23h1.69v1.69h-1.69zM1866.84 61.92h1.69v1.69h-1.69zM1868.54 61.92h1.69v1.69h-1.69zM1873.62 61.92h1.69v1.69h-1.69zM1888.87 61.92h1.69v1.69h-1.69zM1893.95 61.92h1.69v1.69h-1.69zM1895.65 61.92h5.08v1.69h-5.08zM1900.73 61.92h1.69v1.69h-1.69zM1905.82 61.92h5.08v1.69h-5.08zM1866.84 63.62h1.69v1.69h-1.69zM1870.23 63.62h3.39v1.69h-3.39zM1880.40 63.62h1.69v1.69h-1.69zM1882.09 63.62h1.69v1.69h-1.69zM1888.87 63.62h1.69v1.69h-1.69zM1890.56 63.62h1.69v1.69h-1.69zM1892.26 63.62h1.69v1.69h-1.69zM1893.95 63.62h1.69v1.69h-1.69zM1895.65 63.62h1.69v1.69h-1.69zM1897.34 63.62h3.39v1.69h-3.39zM1900.73 63.62h5.08v1.69h-5.08zM1866.84 65.31h1.69v1.69h-1.69zM1871.92 65.31h1.69v1.69h-1.69zM1875.31 65.31h3.39v1.69h-3.39zM1880.40 65.31h6.78v1.69h-6.78zM1887.18 65.31h3.39v1.69h-3.39zM1892.26 65.31h1.69v1.69h-1.69zM1904.12 65.31h1.69v1.69h-1.69zM1865.15 67.01h5.08v1.69h-5.08zM1870.23 67.01h1.69v1.69h-1.69zM1871.92 67.01h1.69v1.69h-1.69zM1878.70 67.01h1.69v1.69h-1.69zM1892.26 67.01h1.69v1.69h-1.69zM1895.65 67.01h1.69v1.69h-1.69zM1900.73 67.01h1.69v1.69h-1.69zM1907.51 67.01h1.69v1.69h-1.69z" fill="#242a32"/>
<rect x="1849.05" y="6.85" width="10.17" height="10.17" fill="none" stroke="#242a32" stroke-width="1.69"/>
<rect x="1851.59" y="9.39" width="5.08" height="5.08" fill="#242a32"/>
<rect x="1899.89" y="6.85" width="10.17" height="10.17" fill="none" stroke="#242a32" stroke-width="1.69"/>
<rect x="1902.43" y="9.39" width="5.08" height="5.08" fill="#242a32"/>
<rect x="1849.05" y="57.69" width="10.17" height="10.17" fill="none" stroke="#242a32" stroke-width="1.69"/>
<rect x="1851.59" y="60.23" width="5.08" height="5.08" fill="#242a32"/>
<circle cx="1876.400" cy="34" r="4.600" fill="#56743e"/>
<path transform="translate(1849.1 71)" d="M3 0L0 3M3 3.500L0 7M2 6V11.500M4.500 1v3h3.500v-3M6.200 0v4M4 5.500h4.500M5 7v3l-1.500 1.500M5 7h2.500v3.500q0 1 1 1M10 0L8.500 3.500M9.500 2H12M11.500 2L9 11.500M9.500 5l2.500 6.500" stroke="#383e46" stroke-width="1.150" fill="none"/>
<path transform="translate(1865.8 71)" d="M3 0L0 5M2 3.500V11.500M7 0l1 1.500M4.500 2.500H12M5.500 4.500h5.500M5.500 6.500h5.500M5.500 8.500H11V11.500H5.500Z" stroke="#383e46" stroke-width="1.150" fill="none"/>
<path transform="translate(1882.6 71)" d="M0 .5H5.500M1 .5V9M4.500 .5V11.500M1 3.500h3.500M1 6.500h3.500M0 9.500l5.500-1.500M7.500 0l1 2M11 0l-1 2M6.500 3H12M6 6H12M9 3V6q0 3-3 5.500M9 6.500q.5 3 3 5" stroke="#383e46" stroke-width="1.150" fill="none"/>
<path transform="translate(1899.3 71)" d="M10 0Q6 1.500 1 1.500M6 2L2.500 5H8M8.500 3.500L3 8H10M6 8V11.500M3 9.500l-2 2M9 9.500l2 2" stroke="#383e46" stroke-width="1.150" fill="none"/>
<path d="M1855 17h9.500" stroke="#f4f4f4" stroke-width="1.800"/>
<path d="M1876 12.500h6.500v7h-6.500zM1878 12.500v-2h6.500v7h-2" stroke="#f4f4f4" stroke-width="1.500" fill="none"/>
<path d="M1896 11l7.500 7.500M1903.500 11l-7.500 7.500" stroke="#f4f4f4" stroke-width="1.900"/>
<path transform="translate(1757.8 766.500) scale(.985 1)" d="M6 1.500H24V11H6ZM6 6.200H24M8.500 14L3 20.500M7 15H26V24q0 3-3.500 3M14.500 16L8 26.500M20.500 16L14 26.500" fill="none" stroke="#782230" stroke-width="4.300" stroke-linejoin="miter"/>
<path transform="translate(1787.5 766.500) scale(.985 1)" d="M3 2.500l3.500 3.500M1.500 10.500h5.500v10l-4.500 4.500M6 23.500q3 3 8 3H29.500M11.500 7H27.500V21H11.500ZM11.500 14H27.500M19.500 1V21" fill="none" stroke="#782230" stroke-width="4.300" stroke-linejoin="miter"/>
<path transform="translate(1817.2 766.500) scale(.985 1)" d="M1.500 8h10M7 1V24q0 3-3.500 2M1.500 18.500l10-4.500M13 3H29.500M20.500 3L13 16.500M16 14H28V26H16Z" fill="none" stroke="#782230" stroke-width="4.300" stroke-linejoin="miter"/>
<path transform="translate(1846.9 766.500) scale(.985 1)" d="M1.500 9h10M6.500 2V20M1 22.500l10.500-3.500M20.500 0v4M13 5H29.500M16.500 7l2 5M26 7l-2 5M12 13.500H30M15.500 17.500H27V26.500H15.500Z" fill="none" stroke="#204c86" stroke-width="4.300" stroke-linejoin="miter"/>
<path transform="translate(1876.6 766.500) scale(.985 1)" d="M3 2l4 3.500M1 10.500h6v13l4.500-3.500M14.500 3V20q0 5-3.500 7M21.500 5V24M28 2V27.500" fill="none" stroke="#204c86" stroke-width="4.300" stroke-linejoin="miter"/>
<path d="M1757 796.500H1908M1757 798.500H1908" stroke="#656b75" stroke-width="1" shape-rendering="crispEdges"/>
<path d="M1760.8 803.4H1772.4M1761.1 806.4H1770.0M1758.8 809.5H1769.2M1757.6 813.5H1769.1M1758.9 804.4V813.6M1764.9 805.7V814.8M1770.3 802.3V812.7" stroke="#80868f" stroke-width="2.5" fill="none"/>
<path d="M1760.8 803.4H1772.4M1761.1 806.4H1770.0M1758.8 809.5H1769.2M1757.6 813.5H1769.1M1758.9 804.4V813.6M1764.9 805.7V814.8M1770.3 802.3V812.7" stroke="#181d25" stroke-width="1.2" fill="none"/>
<path d="M1775.4 803.2H1788.9M1776.7 807.7H1786.9M1775.9 810.3H1786.8M1777.4 813.8H1787.0M1778.0 803.6V814.9M1780.9 804.7V814.8M1787.5 804.3V815.1" stroke="#80868f" stroke-width="2.5" fill="none"/>
<path d="M1775.4 803.2H1788.9M1776.7 807.7H1786.9M1775.9 810.3H1786.8M1777.4 813.8H1787.0M1778.0 803.6V814.9M1780.9 804.7V814.8M1787.5 804.3V815.1" stroke="#181d25" stroke-width="1.2" fill="none"/>
<path d="M1791.6 803.8H1805.5M1794.3 806.3H1804.0M1791.8 811.0H1804.9M1792.3 812.7H1804.6M1792.6 802.6V813.5M1799.1 802.7V813.7M1804.9 801.8V813.1" stroke="#80868f" stroke-width="2.5" fill="none"/>
<path d="M1791.6 803.8H1805.5M1794.3 806.3H1804.0M1791.8 811.0H1804.9M1792.3 812.7H1804.6M1792.6 802.6V813.5M1799.1 802.7V813.7M1804.9 801.8V813.1" stroke="#181d25" stroke-width="1.2" fill="none"/>
<path d="M1811.1 802.6H1823.0M1811.0 806.8H1820.5M1810.4 810.1H1823.4M1809.9 813.5H1820.3M1811.1 804.9V814.1M1815.0 805.2V813.1M1820.6 802.2V813.9" stroke="#80868f" stroke-width="2.5" fill="none"/>
<path d="M1811.1 802.6H1823.0M1811.0 806.8H1820.5M1810.4 810.1H1823.4M1809.9 813.5H1820.3M1811.1 804.9V814.1M1815.0 805.2V813.1M1820.6 802.2V813.9" stroke="#181d25" stroke-width="1.2" fill="none"/>
<path d="M1827.5 803.3H1837.3M1826.3 806.2H1840.4M1825.5 809.5H1839.9M1829.2 813.6H1837.9M1827.6 803.4V813.4M1832.5 802.1V813.0M1838.4 802.3V815.1" stroke="#80868f" stroke-width="2.5" fill="none"/>
<path d="M1827.5 803.3H1837.3M1826.3 806.2H1840.4M1825.5 809.5H1839.9M1829.2 813.6H1837.9M1827.6 803.4V813.4M1832.5 802.1V813.0M1838.4 802.3V815.1" stroke="#181d25" stroke-width="1.2" fill="none"/>
<path d="M1844.3 803.0H1857.2M1842.8 806.5H1857.5M1842.9 809.8H1856.3M1842.6 814.1H1855.2M1843.9 805.0V813.3M1849.1 805.2V813.4M1853.7 803.5V813.4" stroke="#80868f" stroke-width="2.5" fill="none"/>
<path d="M1844.3 803.0H1857.2M1842.8 806.5H1857.5M1842.9 809.8H1856.3M1842.6 814.1H1855.2M1843.9 805.0V813.3M1849.1 805.2V813.4M1853.7 803.5V813.4" stroke="#181d25" stroke-width="1.2" fill="none"/>
<path d="M1861.0 804.3H1872.3M1860.4 807.6H1872.6M1863.1 810.4H1874.4M1860.7 812.8H1871.4M1863.0 802.3V812.8M1867.1 805.7V812.8M1870.8 805.7V814.0" stroke="#80868f" stroke-width="2.5" fill="none"/>
<path d="M1861.0 804.3H1872.3M1860.4 807.6H1872.6M1863.1 810.4H1874.4M1860.7 812.8H1871.4M1863.0 802.3V812.8M1867.1 805.7V812.8M1870.8 805.7V814.0" stroke="#181d25" stroke-width="1.2" fill="none"/>
<path d="M1878.1 803.2H1889.8M1878.4 806.5H1890.0M1878.1 809.3H1891.4M1877.5 812.8H1887.9M1878.9 804.0V812.8M1885.2 804.1V814.7M1889.1 803.3V812.7" stroke="#80868f" stroke-width="2.5" fill="none"/>
<path d="M1878.1 803.2H1889.8M1878.4 806.5H1890.0M1878.1 809.3H1891.4M1877.5 812.8H1887.9M1878.9 804.0V812.8M1885.2 804.1V814.7M1889.1 803.3V812.7" stroke="#181d25" stroke-width="1.2" fill="none"/>
<path d="M1894.0 803.6H1905.8M1897.0 806.5H1907.8M1894.1 810.8H1904.9M1893.9 814.4H1906.1M1895.2 803.9V813.0M1900.0 802.7V815.1M1904.7 803.8V814.9" stroke="#80868f" stroke-width="2.5" fill="none"/>
<path d="M1894.0 803.6H1905.8M1897.0 806.5H1907.8M1894.1 810.8H1904.9M1893.9 814.4H1906.1M1895.2 803.9V813.0M1900.0 802.7V815.1M1904.7 803.8V814.9" stroke="#181d25" stroke-width="1.2" fill="none"/>
</svg>
<div class="t"  style="left:3.800px;top:6.700px;color:#dedede;font-weight:bold;font-size:12px;letter-spacing:-0.357px;">[−][Top][2D Wireframe]</div>
<div class="abs" style="left:382.5px;top:796.3px;width:1149.5px;height:25.40000000000009px;background:#c0c2c5;border-radius:3px 2px 2px 3px"></div>
<div class="abs" style="left:382.5px;top:796.3px;width:53.5px;height:25.40000000000009px;background:linear-gradient(#585b60,#3f4247 45%,#2d2f33);border-radius:3px 0 0 3px"></div>
<svg width="1916" height="823"><g fill="#a9acb1"><rect x="386.5" y="800.6" width="1.400" height="1.400"/><rect x="386.5" y="803.1" width="1.400" height="1.400"/><rect x="386.5" y="805.7" width="1.400" height="1.400"/><rect x="386.5" y="808.2" width="1.400" height="1.400"/><rect x="386.5" y="810.8" width="1.400" height="1.400"/><rect x="386.5" y="813.4" width="1.400" height="1.400"/><rect x="386.5" y="815.9" width="1.400" height="1.400"/><rect x="389.0" y="800.6" width="1.400" height="1.400"/><rect x="389.0" y="803.1" width="1.400" height="1.400"/><rect x="389.0" y="805.7" width="1.400" height="1.400"/><rect x="389.0" y="808.2" width="1.400" height="1.400"/><rect x="389.0" y="810.8" width="1.400" height="1.400"/><rect x="389.0" y="813.4" width="1.400" height="1.400"/><rect x="389.0" y="815.9" width="1.400" height="1.400"/></g><path d="M398.200 805l7.800 7.800M406 805l-7.800 7.800" stroke="#e6e6e6" stroke-width="2"/><path d="M422.800 807.800l6.300 6.300" stroke="#ececec" stroke-width="2.700" stroke-linecap="round"/><circle cx="421.300" cy="806.300" r="3.500" fill="#ececec"/><path d="M421.100 806.100l-1.200-4.500-3.300 3.300z" fill="#4d5055"/><rect x="441.500" y="802.200" width="13.800" height="13.200" rx="1.500" fill="#b4b8c2" stroke="#80848e" stroke-width="1"/><path d="M444.200 805.200l4 3.400-4 3.400M449.500 812.800h4" stroke="#2b3038" stroke-width="1.400" fill="none"/><path d="M459 806.700h6.400l-3.200 3.400z" fill="#55585d"/><path d="M1521 812l4-4.500 4 4.500z" fill="#222"/></svg>
<div class="t"  style="left:473px;top:801.800px;font-family:'Liberation Mono',monospace;font-style:italic;font-size:11.500px;color:#7b7b7b;line-height:15px;letter-spacing:-0.002px;">Type a command</div>
<div class="abs" style="left:37px;top:381px;width:649px;height:348px;background:#c9c9c9;border:1px solid #d9d9d9;border-radius:2px;box-shadow:0 0 0 1px rgba(90,96,104,.35)"></div>
<div class="abs" style="left:58px;top:383px;width:624px;height:344px;background:#f0f0f0;border:1px solid #6e6e6e;border-radius:6px 4px 3px 4px;box-shadow:inset 1px 1px 0 #fff"></div>
<svg width="1916" height="823"><g stroke="#000" fill="#000"><path d="M45.600 387.500l8.800 7.400M54.400 387.500l-8.800 7.400" stroke-width="2.700" fill="none"/><path d="M41.900 404.200v10.700" stroke-width="1.700"/><path d="M43.200 409.600l4.400-3.500v7zM53.100 409.600l-4.600-3.500v7z" stroke="none"/><rect x="43" y="423" width="12.200" height="11" stroke="none"/><rect x="48.800" y="426.500" width="5" height="2" fill="#d0d0d0" stroke="none"/><rect x="48.800" y="429.700" width="5" height="2.500" fill="#d0d0d0" stroke="none"/></g></svg>
<div class="t" style="left:47px;top:633.5px;width:0;height:0;overflow:visible"><div style="position:absolute;left:-75px;top:-8px;width:150px;height:16px;line-height:16px;text-align:center;transform:rotate(-90deg);color:#1a1a1a;font-size:12px;letter-spacing:-.2px" >Layer Properties Manager</div></div>
<svg style="left:40.0px;top:710.4px;" width="16" height="16"><use href="#stk2" width="16" height="16"/></svg>
<div class="abs" style="left:61px;top:389px;width:490px;height:22px;background:#f3f3f3;border:1px solid;border-color:#b4b4b4 #fdfdfd #fdfdfd #b4b4b4"></div>
<div class="t" style="left:64.1px;top:393.9px;letter-spacing:-0.193px;">Current layer: Surface Print</div>
<div class="abs" style="left:555px;top:391px;width:125px;height:23px;background:#fff;border:1px solid #e3e3e3;border-top-color:#c8c8c8"></div>
<div class="t" style="left:558.4px;top:394.5px;letter-spacing:-0.263px;color:#6d6d6d">Search for layer</div>
<svg style="left:661.5px;top:394.8px;" width="14" height="14"><use href="#mag" width="14" height="14"/></svg>
<svg style="left:64.4px;top:418.3px;" width="16" height="13"><use href="#fil" width="16" height="13"/></svg>
<svg style="left:86.4px;top:418.3px;" width="17" height="13"><use href="#fil2" width="17" height="13"/></svg>
<div class="abs" style="left:109px;top:415px;width:1px;height:19px;background:#9c9c9c"></div>
<svg style="left:117.6px;top:417.8px;" width="17" height="14"><use href="#sta" width="17" height="14"/></svg>
<svg style="left:192.1px;top:418.9px;" width="16.5" height="11.5"><use href="#newl" width="16.5" height="11.5"/></svg>
<svg style="left:214.4px;top:417.8px;" width="16.5" height="14"><use href="#newf" width="16.5" height="14"/></svg>
<svg style="left:239.2px;top:418.2px;" width="14" height="14"><use href="#del" width="14" height="14"/></svg>
<svg style="left:260.3px;top:418.8px;" width="17" height="13"><use href="#chk" width="17" height="13"/></svg>
<svg style="left:630.1px;top:416.2px;" width="20" height="17.5"><use href="#ref" width="20" height="17.5"/></svg>
<svg style="left:654.0px;top:416.0px;" width="18" height="18"><use href="#wr" width="18" height="18"/></svg>
<div class="abs" style="left:62px;top:441px;width:199px;height:251px;background:#fff;border:1px solid #828282"></div>
<div class="abs" style="left:63px;top:442px;width:197px;height:21px;background:#f0f0f0;border-bottom:1px solid #9a9a9a"></div>
<svg style="left:67.4px;top:446.0px;" width="16" height="13"><use href="#fil" width="16" height="13"/></svg>
<div class="t" style="left:89.0px;top:444.8px;letter-spacing:-0.282px;">Filters</div>
<svg style="left:243.500px;top:446px" width="13" height="11"><path d="M6 1L1.500 5.500 6 10M11.500 1L7 5.500l4.500 4.500" fill="none" stroke="#111" stroke-width="1.900"/></svg>
<div class="abs" style="left:63px;top:670px;width:197px;height:21px;background:#f0f0f0;border-top:1px solid #9a9a9a"></div>
<svg style="left:243.500px;top:675px" width="13" height="11"><path d="M6 1L1.500 5.500 6 10M11.500 1L7 5.500l4.500 4.500" fill="none" stroke="#111" stroke-width="1.900"/></svg>
<div class="abs" style="left:67px;top:674px;width:13px;height:13px;background:linear-gradient(135deg,#dcdcdc,#fff);border:1px solid #8e8f8f;box-shadow:inset 0 0 0 1px #f4f4f4"></div>
<div class="t" style="left:82.5px;top:673.8px;letter-spacing:0.099px;">Invert filter</div>
<div class="abs" style="left:71.5px;top:467.5px;width:9.0px;height:9.0px;border:1px solid #919191;background:linear-gradient(#fff,#e4e4e4)"></div>
<div class="abs" style="left:73.5px;top:471.5px;width:5.0px;height:1.0px;background:#333"></div>
<svg width="1916" height="823"><path d="M81.500 472.500H85M94.500 480V489.500H103" stroke="#8a8a8a" stroke-width="1" stroke-dasharray="1 1" fill="none" shape-rendering="crispEdges"/></svg>
<svg style="left:85.0px;top:465.0px;" width="17" height="13"><use href="#stk" width="17" height="13"/></svg>
<div class="abs" style="left:104px;top:464px;width:20px;height:17px;background:#e9e9e9"></div>
<div class="t" style="left:107.0px;top:465.6px;letter-spacing:0.052px;">All</div>
<svg style="left:104.5px;top:482.7px;" width="16" height="13"><use href="#fil" width="16" height="13"/></svg>
<div class="t" style="left:126.2px;top:482.2px;letter-spacing:-0.350px;">All Used Layers</div>
<div class="abs" style="left:264px;top:441px;width:415.5px;height:251px;background:#fff;border:2px solid #1d1d1d;border-width:2px 1.500px 1.500px 1.500px"></div>
<div class="abs" style="left:266px;top:443px;width:412.5px;height:21px;"></div>
<div class="abs" style="left:266px;top:443px;width:412.5px;height:21px;background:linear-gradient(#fff 0%,#fafbfc 45%,#eef0f3 100%);border-bottom:1px solid #cfcfcf"></div>
<div class="abs" style="left:289px;top:443px;width:170px;height:20px;background:linear-gradient(#f7fafd,#e9f0f8)"></div>
<div class="abs" style="left:288px;top:443px;width:1px;height:20px;background:#dcdfe3"></div>
<div class="abs" style="left:499px;top:443px;width:1px;height:20px;background:#dcdfe3"></div>
<div class="abs" style="left:558.5px;top:443px;width:1.0px;height:20px;background:#dcdfe3"></div>
<div class="abs" style="left:590px;top:443px;width:1px;height:20px;background:#dcdfe3"></div>
<div class="abs" style="left:638px;top:443px;width:1px;height:20px;background:#dcdfe3"></div>
<div class="abs" style="left:266px;top:609px;width:412.5px;height:18px;background:#e1e1e1"></div>
<div class="abs" style="left:459.3px;top:443px;width:1.8999999999999773px;height:231px;background:#989898"></div>
<div class="t" style="left:274.1px;top:447.2px;letter-spacing:-0.450px;">S..</div>
<div class="t" style="left:296.0px;top:447.2px;letter-spacing:-0.029px;">Name</div>
<div class="t" style="left:468.3px;top:447.2px;letter-spacing:-0.358px;">On</div>
<div class="t" style="left:506.8px;top:447.2px;letter-spacing:-0.450px;">Freeze</div>
<div class="t" style="left:566.3px;top:447.2px;letter-spacing:-0.450px;">L...</div>
<div class="t" style="left:597.4px;top:447.2px;letter-spacing:-0.058px;">Color</div>
<div class="t" style="left:645.0px;top:447.2px;letter-spacing:-0.072px;">Linety</div>
<svg style="left:447.500px;top:451.700px" width="10" height="6"><path d="M0 5.500L4.700 .5l4.700 5z" fill="#a6a6a6"/></svg>
<svg style="left:265.8px;top:469.2px;" width="17.5" height="9.5"><use href="#lay" width="17.5" height="9.5"/></svg>
<div class="t" style="left:292.9px;top:466.5px;letter-spacing:-0.450px;">0</div>
<svg style="left:475.6px;top:466.8px;color:#9cc2df" width="8.7" height="14.5"><use href="#bulb" width="8.7" height="14.5"/></svg>
<svg style="left:520.6px;top:465.6px;" width="15.5" height="15.5"><use href="#sun" width="15.5" height="15.5"/></svg>
<svg style="left:565.5px;top:466.8px;" width="17" height="14.5"><use href="#lock" width="17" height="14.5"/></svg>
<div class="abs" style="left:592px;top:469px;width:12px;height:12px;background:#fff;border:1px solid #000"></div>
<div class="t" style="left:610.9px;top:466.5px;letter-spacing:-0.129px;">w...</div>
<svg style="left:265.8px;top:487.2px;" width="17.5" height="9.5"><use href="#lay" width="17.5" height="9.5"/></svg>
<div class="t" style="left:292.9px;top:484.5px;letter-spacing:-0.006px;">2.54mm Through hole pad</div>
<svg style="left:475.6px;top:484.8px;color:#fff8cc" width="8.7" height="14.5"><use href="#bulb" width="8.7" height="14.5"/></svg>
<svg style="left:520.6px;top:483.6px;" width="15.5" height="15.5"><use href="#sun" width="15.5" height="15.5"/></svg>
<svg style="left:565.5px;top:484.8px;" width="17" height="14.5"><use href="#lock" width="17" height="14.5"/></svg>
<div class="abs" style="left:592px;top:487px;width:12px;height:12px;background:#0d7a0d;border:1px solid #000"></div>
<div class="t" style="left:610.9px;top:484.5px;letter-spacing:-0.450px;">94</div>
<svg style="left:265.8px;top:505.2px;" width="17.5" height="9.5"><use href="#lay" width="17.5" height="9.5"/></svg>
<div class="t" style="left:292.9px;top:502.5px;letter-spacing:-0.000px;">Defpoints</div>
<svg style="left:475.6px;top:502.8px;color:#fff8cc" width="8.7" height="14.5"><use href="#bulb" width="8.7" height="14.5"/></svg>
<svg style="left:520.6px;top:501.6px;" width="15.5" height="15.5"><use href="#sun" width="15.5" height="15.5"/></svg>
<svg style="left:565.5px;top:502.8px;" width="17" height="14.5"><use href="#lock" width="17" height="14.5"/></svg>
<div class="abs" style="left:592px;top:505px;width:12px;height:12px;background:#fff;border:1px solid #000"></div>
<div class="t" style="left:610.9px;top:502.5px;letter-spacing:-0.129px;">w...</div>
<svg style="left:265.8px;top:523.2px;" width="17.5" height="9.5"><use href="#lay" width="17.5" height="9.5"/></svg>
<div class="t" style="left:292.9px;top:520.5px;letter-spacing:0.212px;">Notation</div>
<svg style="left:475.6px;top:520.8px;color:#9cc2df" width="8.7" height="14.5"><use href="#bulb" width="8.7" height="14.5"/></svg>
<svg style="left:520.6px;top:519.6px;" width="15.5" height="15.5"><use href="#sun" width="15.5" height="15.5"/></svg>
<svg style="left:565.5px;top:520.8px;" width="17" height="14.5"><use href="#lock" width="17" height="14.5"/></svg>
<div class="abs" style="left:592px;top:523px;width:12px;height:12px;background:#f07f78;border:1px solid #000"></div>
<div class="t" style="left:610.9px;top:520.5px;letter-spacing:-0.450px;">11</div>
<svg style="left:265.8px;top:541.2px;" width="17.5" height="9.5"><use href="#lay" width="17.5" height="9.5"/></svg>
<div class="t" style="left:292.9px;top:538.5px;letter-spacing:-0.345px;">PCB board</div>
<svg style="left:475.6px;top:538.8px;color:#fff8cc" width="8.7" height="14.5"><use href="#bulb" width="8.7" height="14.5"/></svg>
<svg style="left:520.6px;top:537.6px;" width="15.5" height="15.5"><use href="#sun" width="15.5" height="15.5"/></svg>
<svg style="left:565.5px;top:538.8px;" width="17" height="14.5"><use href="#lock" width="17" height="14.5"/></svg>
<div class="abs" style="left:592px;top:541px;width:12px;height:12px;background:#cdcdcd;border:1px solid #000"></div>
<div class="t" style="left:610.9px;top:538.5px;letter-spacing:-0.450px;">254</div>
<svg style="left:265.8px;top:559.2px;" width="17.5" height="9.5"><use href="#lay" width="17.5" height="9.5"/></svg>
<div class="t" style="left:292.9px;top:556.5px;letter-spacing:-0.328px;">sub layer 1</div>
<svg style="left:475.6px;top:556.8px;color:#fff8cc" width="8.7" height="14.5"><use href="#bulb" width="8.7" height="14.5"/></svg>
<svg style="left:520.6px;top:555.6px;" width="15.5" height="15.5"><use href="#sun" width="15.5" height="15.5"/></svg>
<svg style="left:565.5px;top:556.8px;" width="17" height="14.5"><use href="#lock" width="17" height="14.5"/></svg>
<div class="abs" style="left:592px;top:559px;width:12px;height:12px;background:#e8141c;border:1px solid #000"></div>
<div class="t" style="left:610.9px;top:556.5px;letter-spacing:-0.450px;">10</div>
<svg style="left:265.8px;top:577.2px;" width="17.5" height="9.5"><use href="#lay" width="17.5" height="9.5"/></svg>
<div class="t" style="left:292.9px;top:574.5px;letter-spacing:-0.282px;">sub layer 2</div>
<svg style="left:475.6px;top:574.8px;color:#fff8cc" width="8.7" height="14.5"><use href="#bulb" width="8.7" height="14.5"/></svg>
<svg style="left:520.6px;top:573.6px;" width="15.5" height="15.5"><use href="#sun" width="15.5" height="15.5"/></svg>
<svg style="left:565.5px;top:574.8px;" width="17" height="14.5"><use href="#lock" width="17" height="14.5"/></svg>
<div class="abs" style="left:592px;top:577px;width:12px;height:12px;background:#0a0ae0;border:1px solid #000"></div>
<div class="t" style="left:610.9px;top:574.5px;letter-spacing:-0.450px;">170</div>
<svg style="left:265.8px;top:595.2px;" width="17.5" height="9.5"><use href="#lay" width="17.5" height="9.5"/></svg>
<div class="t" style="left:292.9px;top:592.5px;letter-spacing:-0.055px;">Surface Pad non through hole</div>
<svg style="left:475.6px;top:592.8px;color:#fff8cc" width="8.7" height="14.5"><use href="#bulb" width="8.7" height="14.5"/></svg>
<svg style="left:520.6px;top:591.6px;" width="15.5" height="15.5"><use href="#sun" width="15.5" height="15.5"/></svg>
<svg style="left:565.5px;top:592.8px;" width="17" height="14.5"><use href="#lock" width="17" height="14.5"/></svg>
<div class="abs" style="left:592px;top:595px;width:12px;height:12px;background:#fdb615;border:1px solid #000"></div>
<div class="t" style="left:610.9px;top:592.5px;letter-spacing:-0.450px;">40</div>
<svg style="left:265.0px;top:611.0px;" width="18" height="13.5"><use href="#chk" width="18" height="13.5"/></svg>
<div class="t" style="left:292.9px;top:610.5px;letter-spacing:-0.190px;">Surface Print</div>
<svg style="left:475.6px;top:610.8px;color:#fff8cc" width="8.7" height="14.5"><use href="#bulb" width="8.7" height="14.5"/></svg>
<svg style="left:520.6px;top:609.6px;" width="15.5" height="15.5"><use href="#sun" width="15.5" height="15.5"/></svg>
<svg style="left:565.5px;top:610.8px;" width="17" height="14.5"><use href="#lock" width="17" height="14.5"/></svg>
<div class="abs" style="left:592px;top:613px;width:12px;height:12px;background:#fff;border:1px solid #000"></div>
<div class="t" style="left:610.9px;top:610.5px;letter-spacing:-0.450px;">255</div>
<div class="abs" style="left:0;top:0;width:678.500px;height:823px;overflow:hidden">
<div class="t" style="left:642.4px;top:466.5px;letter-spacing:-0.031px;">Contin</div>
<div class="t" style="left:642.4px;top:484.5px;letter-spacing:-0.031px;">Contin</div>
<div class="t" style="left:642.4px;top:502.5px;letter-spacing:-0.031px;">Contin</div>
<div class="t" style="left:642.4px;top:520.5px;letter-spacing:-0.031px;">Contin</div>
<div class="t" style="left:642.4px;top:538.5px;letter-spacing:-0.031px;">Contin</div>
<div class="t" style="left:642.4px;top:556.5px;letter-spacing:-0.031px;">Contin</div>
<div class="t" style="left:642.4px;top:574.5px;letter-spacing:-0.031px;">Contin</div>
<div class="t" style="left:642.4px;top:592.5px;letter-spacing:-0.031px;">Contin</div>
<div class="t" style="left:642.4px;top:610.5px;letter-spacing:-0.031px;">Contin</div>
</div>
<div class="abs" style="left:266px;top:675px;width:412.5px;height:15.5px;background:#f0f0f0"></div>
<div class="abs" style="left:283.5px;top:675.5px;width:117.5px;height:14.5px;border:1px solid #9b9b9b;border-radius:2px;background:linear-gradient(#f6f6f6,#e4e4e4 45%,#cfcfcf 55%,#dcdcdc)"></div>
<svg width="1916" height="823"><path d="M276 679l-3.500 3.500 3.500 3.500zM667 679l3.500 3.500-3.500 3.500z" fill="#333"/><path d="M339.500 679.500v6M341.500 679.500v6M343.500 679.500v6" stroke="#555" stroke-width="1" shape-rendering="crispEdges"/></svg>
<div class="abs" style="left:61px;top:699.5px;width:619px;height:22.5px;background:#f0f0f0;border:1px solid;border-color:#a9a9a9 #fdfdfd #fdfdfd #a9a9a9"></div>
<div class="t" style="left:64.1px;top:703.5px;letter-spacing:-0.106px;">All: 9 layers displayed of 9 total layers</div>
</body></html>
